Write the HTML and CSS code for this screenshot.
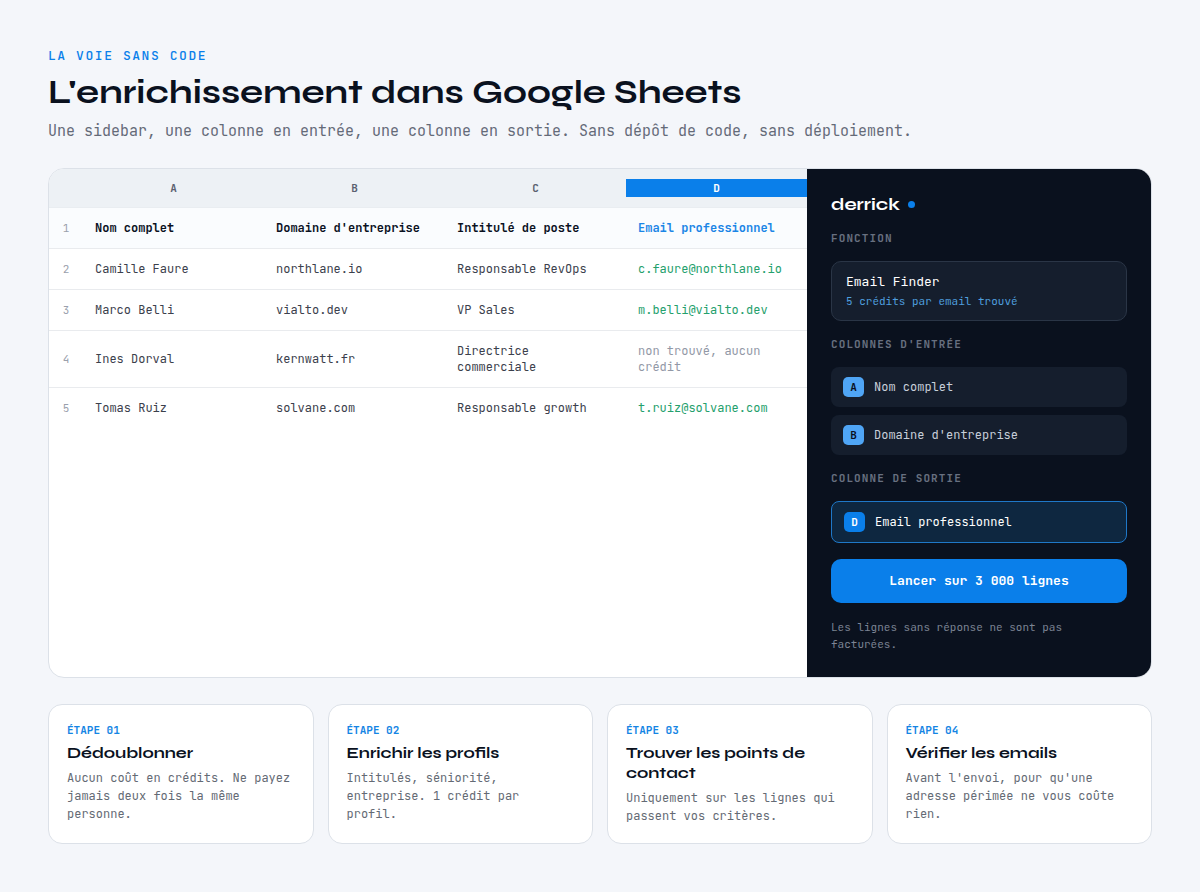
FILE: index.html
```html
<!DOCTYPE html>
<html lang="fr">
<head>
<meta charset="utf-8">
<meta name="viewport" content="width=device-width, initial-scale=1">
<title>L'enrichissement dans Google Sheets</title>
<link rel="stylesheet" href="styles.css">
</head>
<body>
<main class="page">
  <header class="intro">
    <p class="eyebrow">LA VOIE SANS CODE</p>
    <h1 class="title">L'enrichissement dans Google Sheets</h1>
    <p class="subtitle">Une sidebar, une colonne en entrée, une colonne en sortie. Sans dépôt de code, sans déploiement.</p>
  </header>

  <section class="workspace">
    <div class="sheet">
      <table class="grid">
        <colgroup><col class="col-index"><col><col><col><col></colgroup>
        <thead>
          <tr>
            <td></td>
            <th scope="col"><span class="letter">A</span></th>
            <th scope="col"><span class="letter">B</span></th>
            <th scope="col"><span class="letter">C</span></th>
            <th scope="col"><span class="letter letter-active">D</span></th>
          </tr>
        </thead>
        <tbody>
          <tr class="names"><th scope="row">1</th><td>Nom complet</td><td>Domaine d'entreprise</td><td>Intitulé de poste</td><td class="output">Email professionnel</td></tr>
          <tr><th scope="row">2</th><td>Camille Faure</td><td>northlane.io</td><td>Responsable RevOps</td><td class="found">c.faure@northlane.io</td></tr>
          <tr><th scope="row">3</th><td>Marco Belli</td><td>vialto.dev</td><td>VP Sales</td><td class="found">m.belli@vialto.dev</td></tr>
          <tr><th scope="row">4</th><td>Ines Dorval</td><td>kernwatt.fr</td><td>Directrice commerciale</td><td class="missing">non trouvé, aucun crédit</td></tr>
          <tr><th scope="row">5</th><td>Tomas Ruiz</td><td>solvane.com</td><td>Responsable growth</td><td class="found">t.ruiz@solvane.com</td></tr>
        </tbody>
      </table>
    </div>

    <aside class="sidebar">
      <div class="brand">derrick<span class="brand-dot"></span></div>
      <h2 class="label">FONCTION</h2>
      <div class="function">
        <div class="function-name">Email Finder</div>
        <div class="function-cost">5 crédits par email trouvé</div>
      </div>
      <h2 class="label">COLONNES D'ENTRÉE</h2>
      <ul class="columns">
        <li class="column"><span class="key">A</span>Nom complet</li>
        <li class="column"><span class="key">B</span>Domaine d'entreprise</li>
      </ul>
      <h2 class="label">COLONNE DE SORTIE</h2>
      <div class="column column-output"><span class="key">D</span>Email professionnel</div>
      <button class="run" type="button">Lancer sur 3 000 lignes</button>
      <p class="note">Les lignes sans réponse ne sont pas facturées.</p>
    </aside>
  </section>

  <section class="steps">
    <article class="step">
      <p class="step-number">ÉTAPE 01</p>
      <h3 class="step-title">Dédoublonner</h3>
      <p class="step-text">Aucun coût en crédits. Ne payez jamais deux fois la même personne.</p>
    </article>
    <article class="step">
      <p class="step-number">ÉTAPE 02</p>
      <h3 class="step-title">Enrichir les profils</h3>
      <p class="step-text">Intitulés, séniorité, entreprise. 1 crédit par profil.</p>
    </article>
    <article class="step">
      <p class="step-number">ÉTAPE 03</p>
      <h3 class="step-title">Trouver les points de contact</h3>
      <p class="step-text">Uniquement sur les lignes qui passent vos critères.</p>
    </article>
    <article class="step">
      <p class="step-number">ÉTAPE 04</p>
      <h3 class="step-title">Vérifier les emails</h3>
      <p class="step-text">Avant l'envoi, pour qu'une adresse périmée ne vous coûte rien.</p>
    </article>
  </section>
</main>
</body>
</html>
```
FILE: styles.css
```css
:root {
  --ink: #0a111e;
  --blue: #0a7fea;
  --line: #dce1e8;
  --mono: "JetBrains Mono", "DejaVu Sans Mono", monospace;
  --display: Syne, "DejaVu Sans", sans-serif;
}

* {
  box-sizing: border-box;
  margin: 0;
  padding: 0;
}

body {
  background: #f4f6fa;
  color: var(--ink);
  font-family: var(--mono);
  font-size: 12px;
  line-height: 16px;
}

.page {
  display: flex;
  flex-direction: column;
  gap: 26px;
  padding: 48px;
}

.intro {
  display: flex;
  flex-direction: column;
  gap: 8px;
}

.eyebrow {
  color: var(--blue);
  font-size: 13px;
  font-weight: 500;
  letter-spacing: 0.12em;
}

.title {
  font-family: var(--display);
  font-size: 34px;
  font-weight: 700;
  line-height: 40px;
}

.subtitle {
  color: #646a78;
  font-size: 15px;
  line-height: 22px;
}

.workspace {
  display: flex;
  overflow: hidden;
  background: #fff;
  border: 1px solid var(--line);
  border-radius: 16px;
}

.sheet {
  flex: 1;
  min-width: 0;
}

.grid {
  width: 100%;
  table-layout: fixed;
  border-collapse: separate;
  border-spacing: 0;
}

.col-index {
  width: 34px;
}

.grid thead th,
.grid thead td {
  padding: 10px 0;
  background: #edf1f5;
  border-bottom: 1px solid #e9edf1;
}

.letter {
  display: block;
  color: #5b6170;
  font-size: 11px;
  font-weight: 600;
  line-height: 18px;
  text-align: center;
}

.letter-active {
  background: var(--blue);
  color: #fff;
}

.grid tbody th,
.grid tbody td {
  padding: 12px;
  border-bottom: 1px solid #e9ebee;
  color: #3b404c;
  text-align: left;
  vertical-align: middle;
}

.grid tbody th {
  padding: 12px 0;
  color: #9aa0ac;
  font-size: 11px;
  font-weight: 400;
  text-align: center;
}

.grid tbody tr:last-child > * {
  border-bottom: 0;
}

.grid .names > * {
  background: #fafcfe;
}

.grid .names td {
  color: var(--ink);
  font-weight: 700;
}

.grid .names .output {
  color: #1a85e6;
}

.grid tbody .found {
  color: #24a06c;
}

.grid tbody .missing {
  color: #9298a6;
}

.sidebar {
  display: flex;
  flex: 0 0 344px;
  flex-direction: column;
  gap: 16px;
  padding: 24px;
  background: var(--ink);
  color: #fff;
}

.brand {
  display: flex;
  align-items: center;
  gap: 8px;
  font-family: var(--display);
  font-size: 18px;
  font-weight: 700;
  line-height: 22px;
}

.brand-dot {
  width: 7px;
  height: 7px;
  border-radius: 50%;
  background: var(--blue);
}

.label {
  color: #687080;
  font-size: 11px;
  font-weight: 700;
  letter-spacing: 0.1em;
  line-height: 14px;
}

.function {
  display: flex;
  flex-direction: column;
  gap: 3px;
  padding: 11px 14px 12px;
  background: #151e2d;
  border: 1px solid #2a3546;
  border-radius: 10px;
}

.function-name {
  font-size: 13px;
  line-height: 18px;
}

.function-cost {
  color: #4f9fdf;
  font-size: 11px;
  line-height: 14px;
}

.columns {
  display: flex;
  flex-direction: column;
  gap: 8px;
  list-style: none;
}

.column {
  display: flex;
  align-items: center;
  gap: 10px;
  padding: 10px 12px;
  background: #151e2d;
  border-radius: 8px;
  color: #c8cfda;
}

.key {
  width: 21px;
  border-radius: 5px;
  background: #4fa5f5;
  color: var(--ink);
  font-size: 11px;
  font-weight: 700;
  line-height: 20px;
  text-align: center;
}

.column-output {
  background: #0e2740;
  border: 1px solid #1f78c8;
  color: #fff;
}

.column-output .key {
  background: var(--blue);
  color: #fff;
}

.run {
  padding: 13px 16px;
  border: 0;
  border-radius: 10px;
  background: var(--blue);
  color: #fff;
  font: 600 13px/18px var(--mono);
}

.note {
  color: #7c8494;
  font-size: 11px;
  line-height: 17px;
}

.steps {
  display: grid;
  grid-template-columns: repeat(4, 1fr);
  gap: 14px;
}

.step {
  display: flex;
  flex-direction: column;
  gap: 6px;
  padding: 18px;
  background: #fff;
  border: 1px solid var(--line);
  border-radius: 14px;
}

.step-number {
  color: #1585e4;
  font-size: 11px;
  font-weight: 700;
  line-height: 14px;
}

.step-title {
  font-family: var(--display);
  font-size: 16px;
  font-weight: 700;
  line-height: 20px;
}

.step-text {
  color: #646a74;
  line-height: 18px;
}
```
